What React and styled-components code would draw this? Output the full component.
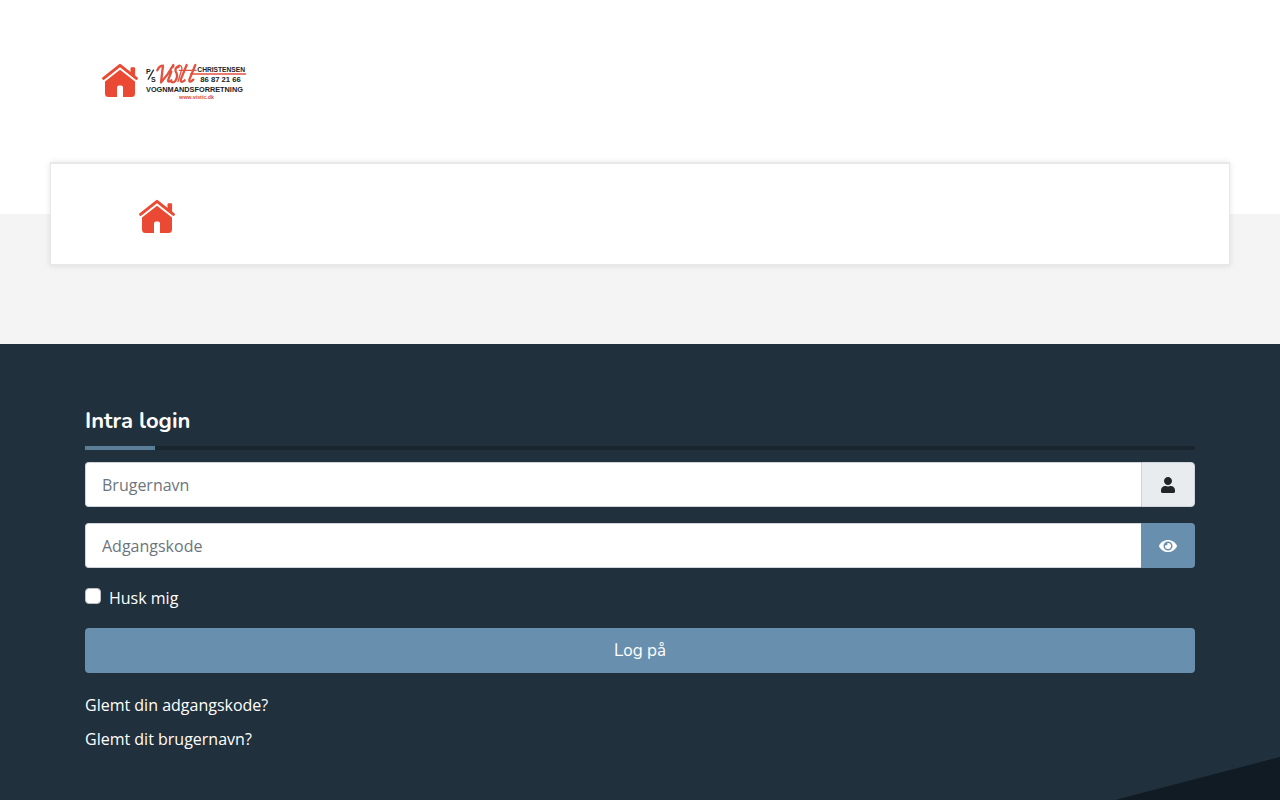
import React, { useState } from "react";
import styled, { createGlobalStyle } from "styled-components";
import { FaUser, FaEye, FaEyeSlash } from "react-icons/fa";

const GlobalStyle = createGlobalStyle`
  * {
    box-sizing: border-box;
  }
  body {
    margin: 0;
    background: #f4f4f4;
    color: #ffffff;
    font-family: "Open Sans", sans-serif;
    font-size: 16px;
    line-height: 24px;
  }
`;

const Page = styled.div`
  min-height: 100vh;
  display: flex;
  flex-direction: column;
  overflow: hidden;
`;

const Header = styled.header`
  height: 214px;
  padding: 63px 102px 0;
  background-color: white;
`;

const Brand = styled.a`
  display: inline-flex;
  gap: 8px;
`;

const Nav = styled.nav`
  height: 104px;
  margin: -52px 50px 78px;
  padding: 35px 88px 0;
  background-color: white;
  border: 1px solid #e8e8e8;
  border-width: 2px 1px;
  box-shadow: 0 0 6px rgba(0, 0, 0, 0.1);
`;

const NavLink = styled.a`
  display: inline-block;
`;

const HomeSvg = styled.svg`
  display: block;
  width: 36px;
  height: 34px;
`;

const LogoSvg = styled.svg`
  display: block;
  width: 100px;
  height: 38px;
`;

const Footer = styled.footer`
  position: relative;
  flex: 1;
  padding: 60px 0 44px;
  background-color: #21303d;
`;

const Corner = styled.svg`
  position: absolute;
  right: 0;
  bottom: 0;
  width: 165px;
  height: 43px;
`;

const Container = styled.div`
  max-width: 1140px;
  margin: 0 auto;
  padding: 0 15px;
`;

const Title = styled.h3`
  position: relative;
  margin: 0 0 12px;
  padding-bottom: 8px;
  border-bottom: 4px solid #1a262f;
  font-family: Nunito, Lato, sans-serif;
  font-size: 22px;
  font-weight: 700;
  line-height: 34px;

  &::after {
    content: "";
    position: absolute;
    left: 0;
    bottom: -4px;
    width: 70px;
    height: 4px;
    background-color: #5b7e99;
  }
`;

const Form = styled.form`
  display: flex;
  flex-direction: column;
  gap: 16px;
`;

const InputGroup = styled.div`
  display: flex;
  height: 45px;
`;

const Input = styled.input`
  flex: 1;
  min-width: 0;
  padding: 0 16px;
  background-color: white;
  border: 1px solid #ced4da;
  border-right: none;
  border-radius: 4px 0 0 4px;
  color: #495057;
  font: inherit;

  &::placeholder {
    color: #6c757d;
    opacity: 1;
  }
`;

const Addon = styled.label`
  width: 54px;
  display: flex;
  align-items: center;
  justify-content: center;
  background-color: #e9ecef;
  border: 1px solid #ced4da;
  border-radius: 0 4px 4px 0;
  color: #212529;
`;

const ToggleButton = styled.button`
  width: 54px;
  display: flex;
  align-items: center;
  justify-content: center;
  padding: 0;
  background-color: #698faf;
  border: none;
  border-radius: 0 4px 4px 0;
  color: white;
  cursor: pointer;
`;

const Remember = styled.label`
  display: flex;
  gap: 8px;
  height: 28px;
  padding-top: 2px;
`;

const Checkbox = styled.input`
  appearance: none;
  width: 16px;
  height: 16px;
  margin: 2px 0 0;
  background-color: white;
  border: 1px solid #bfbfbf;
  border-radius: 4px;

  &:checked {
    background-color: #698faf;
  }
`;

const Button = styled.button`
  height: 45px;
  background-color: #698faf;
  border: none;
  border-radius: 4px;
  color: white;
  font-family: Nunito, Lato, sans-serif;
  font-size: 17px;
  font-weight: 400;
  cursor: pointer;
`;

const Links = styled.ul`
  display: flex;
  flex-direction: column;
  gap: 10px;
  margin: 20px 0 0;
  padding: 0;
  list-style: none;
`;

const FooterLink = styled.a`
  color: white;
  text-decoration: none;
`;

const HomeIcon = () => (
  <HomeSvg viewBox="0 0 36 34" aria-hidden="true">
    <path
      d="M1.6 15.4 18 2.4 34.4 15.4"
      fill="none"
      stroke="#ea4a33"
      strokeWidth="3"
      strokeLinecap="round"
      strokeLinejoin="round"
    />
    <path d="M28.5 5.2q0-1 1-1h2.6q1 0 1 1v8.600l-4.600-3.700z" fill="#ea4a33" />
    <path
      d="M18 6.800 33 18.600V30.500q0 3.500-3.500 3.500H21V24.500q0-2-2-2h-2q-2 0-2 2V34H6.500Q3 34 3 30.500V18.600z"
      fill="#ea4a33"
    />
  </HomeSvg>
);

const Logo = () => (
  <LogoSvg
    viewBox="0 0 300 114"
    fontFamily="Liberation Sans, sans-serif"
    fontWeight="700"
  >
    <g fill="#222222">
      <text x="0" y="32" fontSize="21">
        P
      </text>
      <text x="15" y="58" fontSize="21">
        S
      </text>
    </g>
    <path d="M23 20 6 50" stroke="#333333" strokeWidth="4" />
    <g
      fill="none"
      stroke="#e2523f"
      strokeLinecap="round"
      strokeLinejoin="round"
    >
      <path
        d="M34 22Q40 8 51 8L45 58Q66 36 82 6M76 26 66 52Q66 60 76 52M98 12Q86 12 89 25 98 38 88 54 80 62 74 54M122 6 104 50Q104 62 116 52M148 6 130 50Q130 62 142 50"
        strokeWidth="7"
      />
      <path d="M92 12Q104 0 108 16L96 56M100 22H150" strokeWidth="4" />
      <path d="M80 12l2-2" strokeWidth="7" />
      <path d="M134 33H300" strokeWidth="4" />
    </g>
    <g fill="#222222">
      <text x="154" y="27" fontSize="20">
        CHRISTENSEN
      </text>
      <text x="163" y="56" fontSize="23">
        86 87 21 66
      </text>
      <text x="0" y="86" fontSize="22">
        VOGNMANDSFORRETNING
      </text>
    </g>
    <text x="99" y="109" fontSize="16" fill="#d94c3c">
      www.vistic.dk
    </text>
  </LogoSvg>
);

const App = () => {
  const [username, setUsername] = useState("");
  const [password, setPassword] = useState("");
  const [visible, setVisible] = useState(false);
  const [remember, setRemember] = useState(false);

  const handleSubmit = (e) => {
    e.preventDefault();
  };

  return (
    <Page>
      <GlobalStyle />
      <Header>
        <Brand href="#" aria-label="Visti Christensen">
          <HomeIcon />
          <Logo />
        </Brand>
      </Header>
      <Nav>
        <NavLink href="#" aria-label="Forside">
          <HomeIcon />
        </NavLink>
      </Nav>
      <Footer>
        <Container>
          <Title>Intra login</Title>
          <Form onSubmit={handleSubmit}>
            <InputGroup>
              <Input
                id="username"
                placeholder="Brugernavn"
                value={username}
                onChange={(e) => setUsername(e.target.value)}
              />
              <Addon htmlFor="username" aria-label="Brugernavn">
                <FaUser size={16} />
              </Addon>
            </InputGroup>
            <InputGroup>
              <Input
                type={visible ? "text" : "password"}
                placeholder="Adgangskode"
                aria-label="Adgangskode"
                value={password}
                onChange={(e) => setPassword(e.target.value)}
              />
              <ToggleButton
                type="button"
                aria-label="Vis adgangskode"
                onClick={() => setVisible(!visible)}
              >
                {visible ? <FaEyeSlash size={18} /> : <FaEye size={18} />}
              </ToggleButton>
            </InputGroup>
            <Remember>
              <Checkbox
                type="checkbox"
                checked={remember}
                onChange={(e) => setRemember(e.target.checked)}
              />
              Husk mig
            </Remember>
            <Button type="submit">Log på</Button>
          </Form>
          <Links>
            <li>
              <FooterLink href="#">Glemt din adgangskode?</FooterLink>
            </li>
            <li>
              <FooterLink href="#">Glemt dit brugernavn?</FooterLink>
            </li>
          </Links>
        </Container>
        <Corner viewBox="0 0 165 43" aria-hidden="true">
          <path d="M0 43 165 0v43z" fill="#111b23" />
        </Corner>
      </Footer>
    </Page>
  );
};

export default App;
